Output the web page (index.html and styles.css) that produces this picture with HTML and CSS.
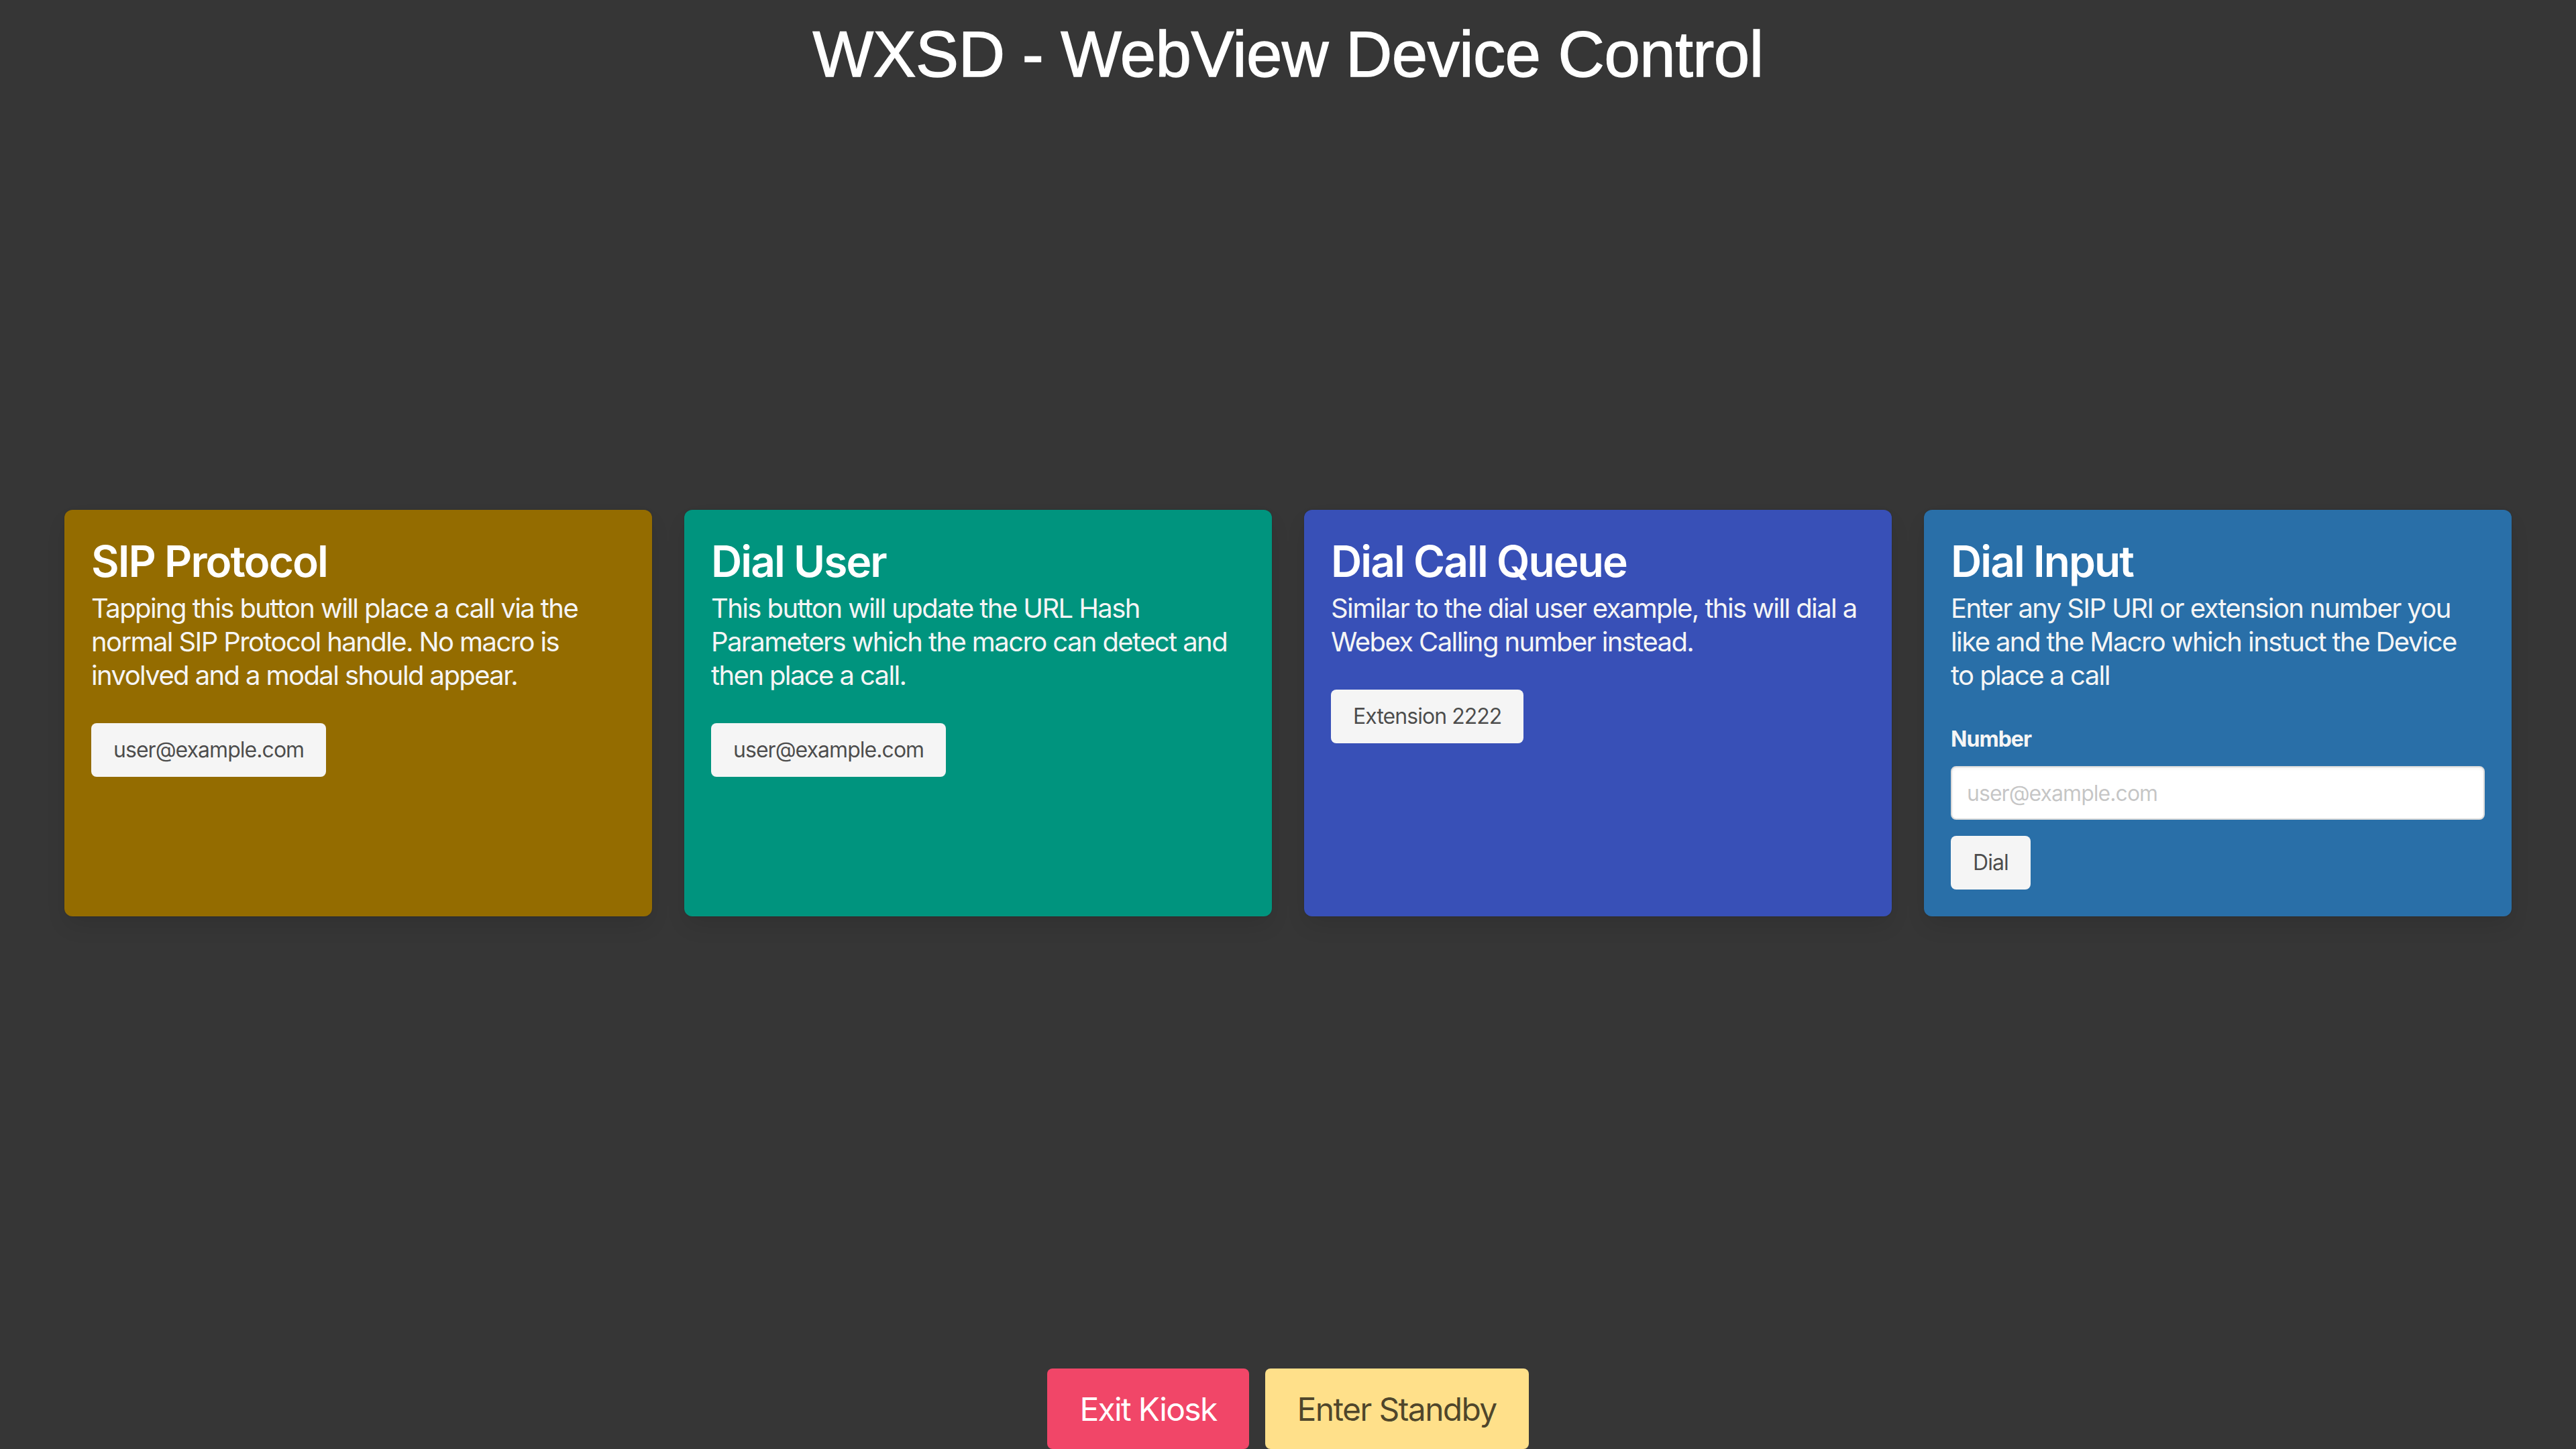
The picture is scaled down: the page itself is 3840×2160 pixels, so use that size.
FILE: index.html
```html
<!DOCTYPE html>
<html lang="en">
<head>
<meta charset="utf-8">
<title>WXSD - WebView Device Control</title>
<link rel="stylesheet" href="styles.css">
</head>
<body>
<div class="page">
  <h1 class="page-title">WXSD - WebView Device Control</h1>
  <main class="main">
    <div class="columns">
      <section class="card card-warning">
        <h2 class="card-title">SIP Protocol</h2>
        <p class="card-text">Tapping this button will place a call via the normal SIP Protocol handle. No macro is involved and a modal should appear.</p>
        <button class="btn">user@example.com</button>
      </section>
      <section class="card card-primary">
        <h2 class="card-title">Dial User</h2>
        <p class="card-text">This button will update the URL Hash Parameters which the macro can detect and then place a call.</p>
        <button class="btn">user@example.com</button>
      </section>
      <section class="card card-link">
        <h2 class="card-title">Dial Call Queue</h2>
        <p class="card-text">Similar to the dial user example, this will dial a Webex Calling number instead.</p>
        <button class="btn">Extension 2222</button>
      </section>
      <section class="card card-info">
        <h2 class="card-title">Dial Input</h2>
        <p class="card-text">Enter any SIP URI or extension number you like and the Macro which instuct the Device to place a call</p>
        <div class="field">
          <label class="label" for="number">Number</label>
          <input class="input" id="number" type="text" placeholder="user@example.com">
        </div>
        <button class="btn">Dial</button>
      </section>
    </div>
  </main>
  <footer class="actions">
    <button class="btn-large btn-danger">Exit Kiosk</button>
    <button class="btn-large btn-warning">Enter Standby</button>
  </footer>
</div>
</body>
</html>
```

FILE: styles.css
```css
html, body {
  margin: 0;
  padding: 0;
  background: #363636;
  height: 2160px;
  overflow: hidden;
}

body {
  font-family: "Inter", "Noto Sans", sans-serif;
}

.page {
  display: flex;
  flex-direction: column;
  height: 2160px;
}

.page-title {
  margin: 0;
  padding-top: 27px;
  font-family: "Liberation Sans", Arial, sans-serif;
  font-weight: 400;
  font-size: 96px;
  line-height: 108px;
  letter-spacing: -0.5px;
  color: #ffffff;
  -webkit-text-stroke: 1.4px #ffffff;
  text-align: center;
}

.main {
  flex: 1;
  display: flex;
  align-items: center;
  padding: 0 96px 49px;
}

.columns {
  flex: 1;
  display: grid;
  grid-template-columns: repeat(4, 1fr);
  gap: 48px;
  align-items: stretch;
}

.card {
  padding: 40px;
  border-radius: 12px;
  box-shadow: 0 16px 32px -4px rgba(10, 10, 10, 0.1), 0 0 0 2px rgba(10, 10, 10, 0.02);
  display: flex;
  flex-direction: column;
  align-items: flex-start;
}

.card-warning { background: #946c00; }
.card-primary { background: #00947e; }
.card-link { background: #3850b7; }
.card-info { background: #296fa8; }

.card-title {
  margin: 0 0 8px;
  padding-top: 2px;
  font-size: 64px;
  font-weight: 600;
  line-height: 70px;
  letter-spacing: -0.03em;
  color: #ffffff;
}

.card-text {
  margin: 0 0 48px;
  padding-top: 2px;
  font-size: 40px;
  font-weight: 400;
  line-height: 50px;
  letter-spacing: -0.04em;
  color: #f5f5f5;
}

.card-text + .btn,
.card-text + .field {
  margin-top: -2px;
}

.btn {
  height: 80px;
  padding: 0 31px;
  border: 2px solid transparent;
  border-radius: 8px;
  background: #f5f5f5;
  color: rgba(0, 0, 0, 0.7);
  font-family: inherit;
  font-size: 32px;
  letter-spacing: -0.03em;
  line-height: 1.5;
  cursor: pointer;
}

.field {
  width: 100%;
  margin-bottom: 24px;
}

.label {
  display: block;
  margin-bottom: 16px;
  font-size: 32px;
  font-weight: 700;
  line-height: 48px;
  letter-spacing: -0.03em;
  color: #f5f5f5;
}

.input {
  box-sizing: border-box;
  width: 100%;
  height: 80px;
  padding: 0 22px;
  border: 2px solid #dbdbdb;
  border-radius: 8px;
  background: #ffffff;
  box-shadow: inset 0 2px 4px rgba(10, 10, 10, 0.05);
  font-family: inherit;
  font-size: 32px;
  letter-spacing: -0.03em;
  color: #363636;
}

.input::placeholder {
  color: rgba(54, 54, 54, 0.3);
}

.actions {
  display: flex;
  justify-content: center;
  gap: 24px;
  height: 120px;
}

.btn-large {
  height: 120px;
  padding: 0 46px;
  border: 2px solid transparent;
  border-radius: 8px;
  font-family: inherit;
  font-size: 48px;
  letter-spacing: -0.035em;
  cursor: pointer;
}

.btn-danger {
  background: #f14668;
  color: #ffffff;
}

.btn-warning {
  background: #ffe08a;
  color: rgba(0, 0, 0, 0.7);
}
```
